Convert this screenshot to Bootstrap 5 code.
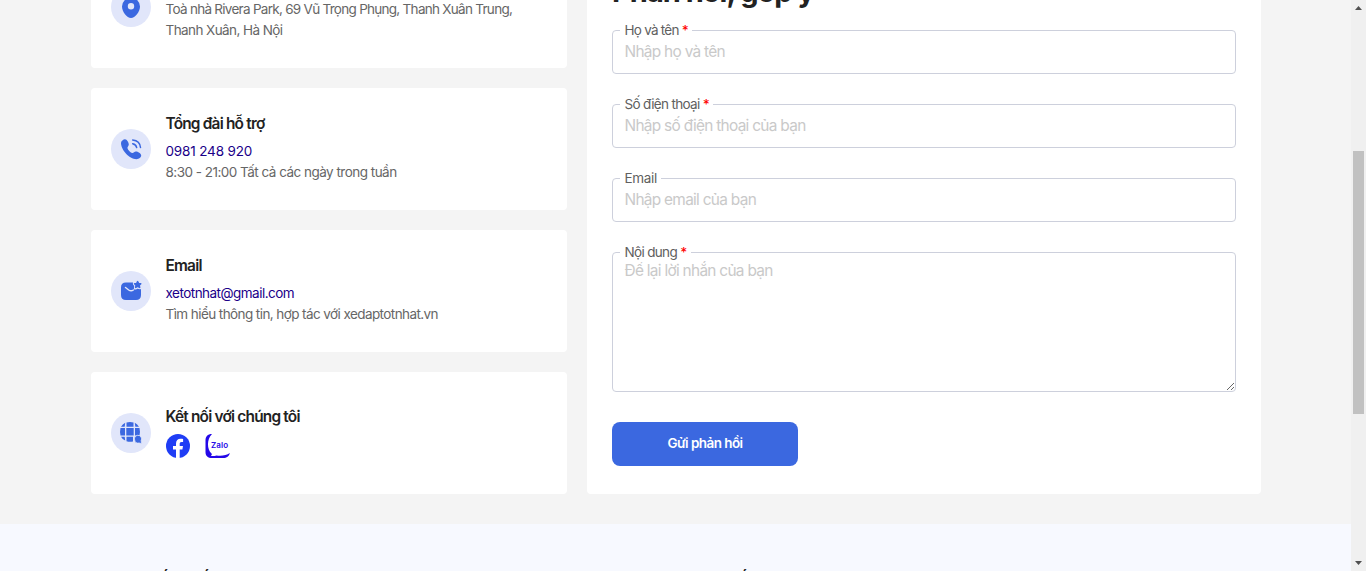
<!DOCTYPE html>
<html lang="vi">
<head>
<meta charset="utf-8">
<meta name="viewport" content="width=device-width, initial-scale=1">
<title>Liên hệ</title>
<link href="https://cdn.jsdelivr.net/npm/bootstrap@5.3.0/dist/css/bootstrap.min.css" rel="stylesheet">
<style>
html,body{height:100%;overflow:hidden}
body{font-family:Inter,"Liberation Sans",sans-serif;background:#f4f4f4;color:#666;font-size:13.5px;line-height:21px;letter-spacing:-.58px}
.page-view{height:571px}
.contact-area{width:1170px;margin:-54px 0 30px 91px;gap:20px;height:548px}
.info-col{width:476px;gap:20px}
.info-box{height:122px;border-radius:4px;padding-left:20px;gap:14.5px}
.round-icon{width:40px;height:40px;background:#e1e6fa;margin-top:40.5px}
.info-text{padding-top:24px;white-space:nowrap}
.info-text.social{padding-top:33px}
.info-title{font-size:15.4px;line-height:24px;font-weight:600;color:#222;letter-spacing:-.79px;margin-bottom:5px}
.info-text a{color:#1a0089;text-decoration:none}
.form-box{border-radius:4px;padding:28px 25px 0}
.form-title{font-size:29px;line-height:36px;font-weight:700;color:#222;letter-spacing:-.98px;margin:0 0 20px}
.field{margin-bottom:30px}
.field label{position:absolute;left:8px;top:-10px;background:#fff;padding:0 4px 0 4.500px;line-height:20px;color:#606060}
.field .form-control{height:44px;border:1px solid #cdd0dc;border-radius:4px;padding:0 11.500px 2px;font-size:15.4px;letter-spacing:-.7px;background:#fff;box-shadow:none}
.field textarea.form-control{height:140px;padding-top:6px;line-height:24px;resize:vertical}
.field .form-control::placeholder{color:#c9c9c9;opacity:1}
.req{color:#f00;font-weight:500}
.send{width:186px;height:44px;border-radius:8px;background:#3b68e0;color:#fff;font-size:13.5px;font-weight:600;letter-spacing:-.56px;padding:0 0 2px}
.ls-addr{letter-spacing:-.72px}.ls-phone{letter-spacing:-.16px}.ls-mail{letter-spacing:-.52px}.ls-name{letter-spacing:-.76px}.ls-field{letter-spacing:-.66px}.ls-short{letter-spacing:-.35px}
.bottom-area{background:#f7f9ff;height:47px;padding:44px 0 0 91px}
.bottom-area h3{font-size:17.500px;line-height:24px;font-weight:700;color:#222;width:598px;letter-spacing:-.35px;margin:0}
.scroll-track{width:15px;background:#f0f0f0}
.scroll-thumb{width:11px;height:263px;margin-top:135px;background:#c1c1c1}
</style>
</head>
<body>
<div class="page-view d-flex overflow-hidden">
<main class="flex-grow-1 overflow-hidden">
  <div class="contact-area d-flex">
    <section class="info-col d-flex flex-column flex-shrink-0">
      <div class="info-box bg-white d-flex">
        <div class="round-icon rounded-circle flex-shrink-0"><svg width="40" height="40"><path fill="#3b68e0" fill-rule="evenodd" d="M20 10.500a9 9 0 0 0-9 9c0 5.500 5 11.500 9 11.500s9-6 9-11.500a9 9 0 0 0-9-9zm0 5.500a3.200 3.200 0 1 1 0 6.400 3.200 3.200 0 0 1 0-6.400z"/></svg></div>
        <div class="info-text"><h2 class="info-title">Địa chỉ</h2><div class="ls-addr">Toà nhà Rivera Park, 69 Vũ Trọng Phụng, Thanh Xuân Trung,</div><div>Thanh Xuân, Hà Nội</div></div>
      </div>
      <div class="info-box bg-white d-flex">
        <div class="round-icon rounded-circle flex-shrink-0"><svg width="40" height="40"><path fill="#3b68e0" d="M10 14c0-2 2.300-3.800 4-3.800 2 0 3.800 3.500 3.800 5.300 0 1.700-1.700 2.300-1.300 3.800.6 2 2.500 4 4.500 4.600 1.500.4 2.200-1.300 3.900-1.300 1.900 0 5.300 1.900 5.300 3.900 0 1.800-2.300 3.700-4.700 3.700C18 30.200 10 20.500 10 14z"/><path fill="none" stroke="#3b68e0" stroke-width="1.500" stroke-linecap="round" d="M21.700 14.700c2.200.5 3.600 1.700 4 3.900M21.700 11c4.700.5 7.400 3 7.800 7.500"/></svg></div>
        <div class="info-text"><h2 class="info-title">Tổng đài hỗ trợ</h2><a href="#" class="d-block ls-phone">0981 248 920</a><div class="ls-mail">8:30 - 21:00 Tất cả các ngày trong tuần</div></div>
      </div>
      <div class="info-box bg-white d-flex">
        <div class="round-icon rounded-circle flex-shrink-0"><svg width="40" height="40"><path fill="#3b68e0" d="M15 11.500h7c-.4 1.600.2 2.600 1.200 3.200l-.3 3.500c2 .9 3-.6 3.800-.5 1 .2 2 .8 3.300.3V24c0 3.500-1.700 5-5 5H15c-3.300 0-5-1.500-5-5v-7.500c0-3.500 1.700-5 5-5z"/><path fill="#3b68e0" stroke="#3b68e0" stroke-width="1.600" stroke-linejoin="round" d="m26.600 10.600 1 1.900 2.100.3-1.500 1.500.4 2.100-2-1-1.900 1 .4-2.100-1.500-1.500 2.100-.3z"/><path fill="none" stroke="#e1e6fa" stroke-width="1.500" stroke-linecap="round" d="m14.500 16.500 3.200 2.500c1.400 1 3.300 1 4.700 0"/></svg></div>
        <div class="info-text"><h2 class="info-title">Email</h2><a href="#" class="d-block ls-mail">xetotnhat@gmail.com</a><div>Tìm hiểu thông tin, hợp tác với xedaptotnhat.vn</div></div>
      </div>
      <div class="info-box bg-white d-flex">
        <div class="round-icon rounded-circle flex-shrink-0"><svg width="40" height="40" fill="#3b68e0"><path d="M15.300 15h7.400v7.400h-7.400zM14 15v7.400H9.500q-.9-3.700 0-7.400zM24 15h4.500q.9 3.700 0 7.400H24zM15.500 13.700V9.400q3.500-1 7 0v4.300zM15.500 23.700h6.500v4.700q-3.300.7-6.500-.2zM14.200 9.800l-.5 3.900H10q1.500-2.600 4.200-3.900zM23.800 9.800l.5 3.900H28q-1.500-2.600-4.200-3.900zM10 23.700h3.700l.5 3.900Q11.500 26.500 10 23.700z"/><path stroke="#e1e6fa" stroke-width=".8" d="M26.700 22.300a3.700 3.700 0 0 1 3.400 5.500l.7 2.700-2.600-.5a3.900 3.900 0 1 1-1.500-7.700z"/></svg></div>
        <div class="info-text social"><h2 class="info-title">Kết nối với chúng tôi</h2>
          <div class="d-flex"><a href="#" class="d-flex me-3" aria-label="Facebook"><svg width="24" height="24"><circle cx="12" cy="12" r="12" fill="#1f3df5"/><path fill="#fff" d="M10 24v-8.500H7V12h3V9.400C10 6.300 11.800 4.700 14.500 4.700c1.300 0 2.600.2 2.600.2v3h-1.500c-1.500 0-1.900.9-1.900 1.800V12H17l-.6 3.500h-2.700V24z"/></svg></a>
          <a href="#" class="d-flex" aria-label="Zalo"><svg width="25" height="24" viewBox="1 0 25 24" overflow="visible"><path fill="#2408e8" d="M7 0C2.500 0 .5 2.500.5 6.500V18c0 4 2.500 6 6.500 6h11c4 0 6-1.500 6.800-5-3.300 2.500-8.500 3.300-13.300 2.500-2 .7-4.500.8-5.700.3 1-.6 1.300-1.400.7-2.200C2 15.500 1.500 5.500 7 0z"/><text x="6" y="14" font-family="Inter" font-size="8" font-weight="600" letter-spacing=".1" fill="#2408e8">Zalo</text></svg></a></div>
        </div>
      </div>
    </section>
    <section class="form-box bg-white flex-grow-1">
      <h1 class="form-title">Phản hồi, góp ý</h1>
      <form>
        <div class="field position-relative"><input class="form-control" id="name" placeholder="Nhập họ và tên"><label for="name" class="ls-name">Họ và tên <span class="req">*</span></label></div>
        <div class="field position-relative"><input class="form-control" id="phone" placeholder="Nhập số điện thoại của bạn"><label for="phone" class="ls-field">Số điện thoại <span class="req">*</span></label></div>
        <div class="field position-relative"><input class="form-control" id="email" placeholder="Nhập email của bạn"><label for="email" class="ls-short">Email</label></div>
        <div class="field position-relative"><textarea class="form-control" id="content" placeholder="Để lại lời nhắn của bạn"></textarea><label for="content" class="ls-field">Nội dung <span class="req">*</span></label></div>
        <button type="button" class="btn send d-block">Gửi phản hồi</button>
      </form>
    </section>
  </div>
  <div class="bottom-area d-flex overflow-hidden"><h3>Xe đạp tốt nhất</h3><h3>Liên kết</h3></div>
</main>
<div class="scroll-track d-flex flex-column align-items-center justify-content-between flex-shrink-0">
  <svg class="mt-1 flex-shrink-0" width="15" height="12"><path fill="#505050" d="M4 6h7L7.500 2z"/></svg>
  <div class="scroll-thumb flex-shrink-0"></div>
  <svg class="mt-auto flex-shrink-0" width="15" height="13"><path fill="#505050" d="M4 3h7L7.500 7z"/></svg>
</div>
</div>
<script src="https://cdn.jsdelivr.net/npm/bootstrap@5.3.0/dist/js/bootstrap.bundle.min.js"></script>
</body>
</html>
